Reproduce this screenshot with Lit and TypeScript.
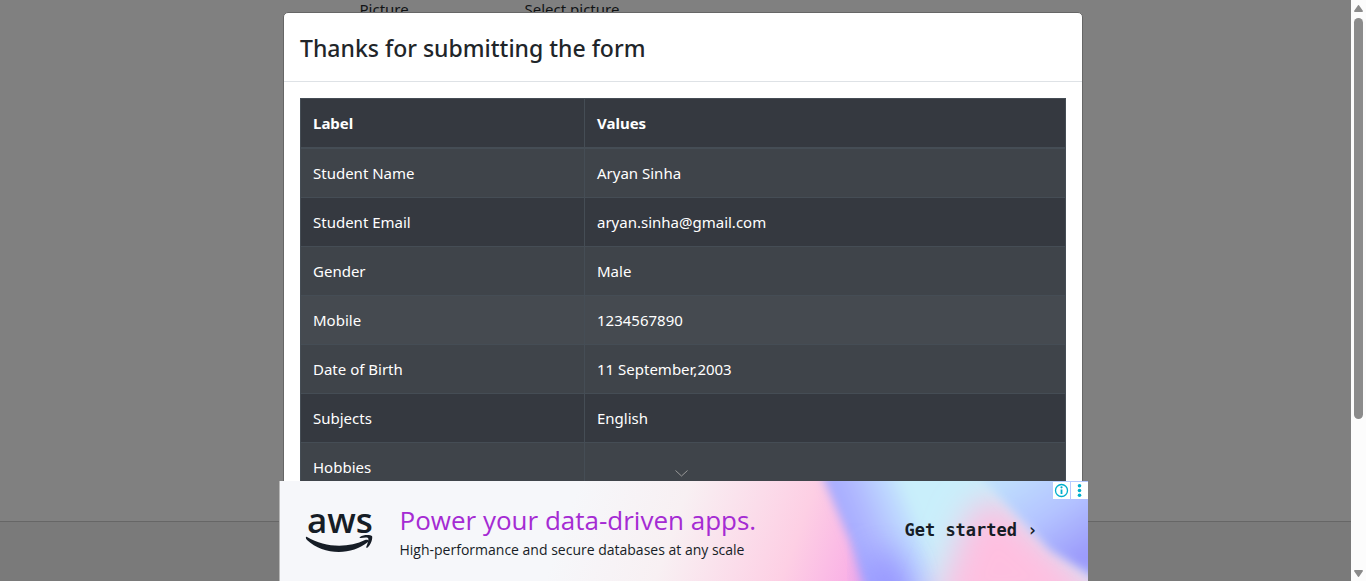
import { LitElement, html, css } from "lit";
import { customElement, property, state } from "lit/decorators.js";

const sans = css`"Noto Sans", "Open Sans", sans-serif`;

@customElement("result-table")
class ResultTable extends LitElement {
  @property({ attribute: false }) rows: [string, string][] = [];

  static styles = css`
    :host { display: block; }
    table { width: 100%; border-collapse: collapse; background: #353940; color: #fff; font-size: 15px; line-height: 24px; }
    th, td { padding: 12px; text-align: left; border: 1px solid #454d55; font-weight: 400; color: #fff; }
    thead th { font-weight: 700; border-bottom-width: 2px; color: #fff; }
    .label { width: 259px; }
    tbody tr:nth-child(odd) { background: #3f444a; }
    tbody tr.active { background: #454a50; }
  `;

  render() {
    return html`<table>
      <thead><tr><th class="label" scope="col">Label</th><th scope="col">Values</th></tr></thead>
      <tbody>
        ${this.rows.map(([label, value]) => html`<tr class=${label === "Mobile" ? "active" : ""}><td>${label}</td><td>${value}</td></tr>`)}
      </tbody>
    </table>`;
  }
}

@customElement("ad-banner")
class AdBanner extends LitElement {
  static styles = css`
    :host { display: block; position: relative; height: 100px; overflow: hidden; background: #f6f7fa; border-left: 1px solid #b8b8b8; }
    .art { position: absolute; inset: 0; width: 100%; height: 100%; }
    .content { position: relative; height: 100%; display: flex; align-items: center; padding: 0 50px 0 26px; box-sizing: border-box; color: #161d26; text-decoration: none; }
    .logo { width: 68px; height: 50px; margin-right: 26px; flex: none; overflow: visible; }
    .logo text { font: 600 35px "Open Sans", sans-serif; fill: #161d26; }
    .copy { flex: 1; white-space: nowrap; padding-top: 6px; }
    .headline { font: 400 26px/32px "Open Sans", sans-serif; color: #a52bd3; }
    .sub { font: 400 14px/28px "Open Sans", sans-serif; color: #161d26; }
    .cta { font: 700 17px/24px "DejaVu Sans Mono", monospace; white-space: nowrap; padding-bottom: 2px; }
    .tools { position: absolute; top: 1px; right: 0; display: flex; gap: 1px; }
    button { width: 17px; height: 17px; padding: 0; border: 0; background: #fff; display: grid; place-items: center; }
    button svg { display: block; }
  `;

  render() {
    return html`
      <svg class="art" viewBox="0 0 808 100" preserveAspectRatio="none" aria-hidden="true">
        <defs>
          <linearGradient id="base" x1="300" y1="0" x2="580" y2="100" gradientUnits="userSpaceOnUse">
            <stop offset="0" stop-color="#f6f7fa"/><stop offset=".35" stop-color="#f8f0f3"/><stop offset=".75" stop-color="#fdcfe4"/><stop offset="1" stop-color="#f9ace6"/>
          </linearGradient>
          <linearGradient id="sky" x1="541" y1="0" x2="613" y2="-30" gradientUnits="userSpaceOnUse">
            <stop offset="0" stop-color="#a4a8ff"/><stop offset=".35" stop-color="#b0b8ff"/><stop offset=".7" stop-color="#bcd4ff"/><stop offset="1" stop-color="#c9effb"/>
          </linearGradient>
          <linearGradient id="right" x1="720" y1="0" x2="780" y2="90" gradientUnits="userSpaceOnUse">
            <stop offset="0" stop-color="#bfdffd"/><stop offset=".5" stop-color="#b4c4ff"/><stop offset="1" stop-color="#9c9bfb"/>
          </linearGradient>
          <filter id="s" x="-50%" y="-50%" width="200%" height="200%"><feGaussianBlur stdDeviation="5"/></filter>
          <filter id="m" x="-50%" y="-50%" width="200%" height="200%"><feGaussianBlur stdDeviation="17"/></filter>
        </defs>
        <rect width="808" height="100" fill="url(#base)"/>
        <path d="M536-20H830V130H592L570 60Z" fill="url(#sky)" filter="url(#s)"/>
        <path d="M590 75L615 75L635 140H604Z" fill="#8c88ff" filter="url(#m)"/>
        <path d="M690 30L715 15L850 135H650Z" fill="#ffbfe0" filter="url(#m)"/>
        <path d="M686-20H840V112L770 69Z" fill="url(#right)" filter="url(#s)"/>
      </svg>
      <a class="content" href="#">
        <svg class="logo" viewBox="0 0 68 50" role="img" aria-label="aws">
          <text x="1" y="27">aws</text>
          <path d="M1 31C19 42 43 42 59 34C62 33 64 35 62 36C45 50 17 49 1 34C-1 32 0 30 1 31Z" fill="#161d26"/>
          <path d="M54 31C58 28 65 29 66 30C67 32 65 39 61 42C60 42 60 41 61 39C62 36 63 33 62 32C60 31 57 32 55 32C54 32 53 32 54 31Z" fill="#161d26"/>
        </svg>
        <div class="copy">
          <div class="headline">Power your data-driven apps.</div>
          <div class="sub">High-performance and secure databases at any scale</div>
        </div>
        <span class="cta">Get started ›</span>
      </a>
      <div class="tools">
        <button aria-label="Ad information"><svg width="15" height="15" viewBox="0 0 15 15"><circle cx="7.5" cy="7.5" r="6" fill="none" stroke="#00aecd" stroke-width="1.3"/><path d="M7.5 6.5V11" stroke="#00aecd" stroke-width="1.8"/><circle cx="7.5" cy="4.3" r="1.1" fill="#00aecd"/></svg></button>
        <button aria-label="Ad options"><svg width="15" height="15" viewBox="0 0 15 15" fill="#00aecd"><circle cx="7.5" cy="2.8" r="1.8"/><circle cx="7.5" cy="7.5" r="1.8"/><circle cx="7.5" cy="12.2" r="1.8"/></svg></button>
      </div>`;
  }
}

@customElement("app-root")
class AppRoot extends LitElement {
  @state() private rows: [string, string][] = [
    ["Student Name", "Aryan Sinha"],
    ["Student Email", "aryan.sinha@gmail.com"],
    ["Gender", "Male"],
    ["Mobile", "1234567890"],
    ["Date of Birth", "11 September,2003"],
    ["Subjects", "English"],
    ["Hobbies", ""],
  ];

  static styles = css`
    :host { display: flex; position: relative; height: 100vh; overflow: hidden; font-family: ${sans}; background: #808080; }
    .page { flex: 1; display: flex; flex-direction: column; color: #111315; font-size: 15px; line-height: 24px; }
    .form { flex: 1; display: grid; grid-template-columns: 165px 1fr; align-content: start; width: 632px; margin: -3px auto 0; }
    .footer { height: 59px; border-top: 1px solid #666; background: #7a7a7a; }
    .scroll { width: 15px; background: #fcfcfc; display: flex; flex-direction: column; align-items: center; justify-content: space-between; padding: 5px 0 4px; box-sizing: border-box; }
    .track { flex: 1; width: 9px; padding: 6px 0; }
    .thumb { height: 73.5%; border-radius: 5px; background: #8b8b8b; }
    .scroll svg { display: block; }
    .overlay { position: absolute; inset: 0; padding-top: 12px; }
    .modal { max-width: 798px; margin: 0 auto; background: #fff; border: 1px solid #666; border-radius: 5px; }
    header { padding: 17px 16px 15px; border-bottom: 1px solid #dee2e6; }
    h1 { margin: 0; font-size: 23px; line-height: 36px; font-weight: 500; color: #212529; }
    .body { padding: 16px; }
    .dock { position: absolute; left: 0; right: 0; bottom: 0; display: flex; flex-direction: column; align-items: center; }
    .dock ad-banner { width: 100%; max-width: 808px; }
    .collapse { border: 0; background: none; padding: 0 4px 4px 0; display: block; }
    .collapse svg { display: block; }
  `;

  render() {
    return html`
      <main class="page">
        <div class="form"><span>Picture</span><span>Select picture</span></div>
        <footer class="footer"></footer>
      </main>
      <div class="scroll" aria-hidden="true">
        <svg width="9" height="7" viewBox="0 0 9 7"><path d="M4.5 0Q5 0 5.5 1L9 6Q9 7 8 7H1Q0 7 0 6L3.5 1Q4 0 4.5 0Z" fill="#8b8b8b"/></svg>
        <div class="track"><div class="thumb"></div></div>
        <svg width="9" height="7" viewBox="0 0 9 7"><path d="M4.5 7Q5 7 5.5 6L9 1Q9 0 8 0H1Q0 0 0 1L3.5 6Q4 7 4.5 7Z" fill="#8b8b8b"/></svg>
      </div>
      <div class="overlay">
        <section class="modal" role="dialog" aria-labelledby="title">
          <header><h1 id="title">Thanks for submitting the form</h1></header>
          <div class="body"><result-table .rows=${this.rows}></result-table></div>
        </section>
      </div>
      <div class="dock">
        <button class="collapse" aria-label="Hide advertisement"><svg width="13" height="7" viewBox="0 0 13 7"><path d="M.5 .5L6.5 6L12.5 .5" fill="none" stroke="#999" stroke-width="1"/></svg></button>
        <ad-banner></ad-banner>
      </div>`;
  }
}
